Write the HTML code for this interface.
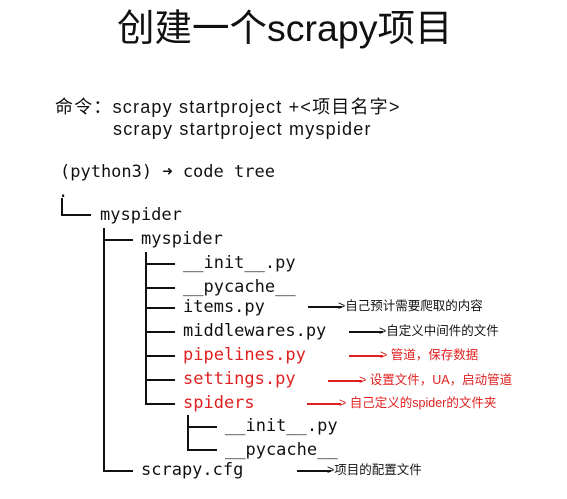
<!DOCTYPE html><html><head><meta charset="utf-8"><style>
body{margin:0;width:567px;height:499px;background:#fff;position:relative;overflow:hidden;font-family:"Liberation Sans","Noto Sans CJK SC",sans-serif;color:#111}
.a{position:absolute;white-space:nowrap}
.m{font-family:"DejaVu Sans Mono","Liberation Mono",monospace;font-size:17px;line-height:20px}
.r{color:#e02020}
.n{font-size:12.5px;line-height:16px}
.v{position:absolute;width:2px;background:#111}
.h{position:absolute;height:2px;background:#111}
.ar{position:absolute;height:1.5px}
.c{font-size:18px;line-height:22px;letter-spacing:1.2px}
</style></head><body>
<div class="a" style="left:117px;top:6px;font-size:37.5px;line-height:44px">创建一个scrapy项目</div>
<div class="a c" style="left:55px;top:96px">命令：scrapy startproject +&lt;项目名字&gt;</div>
<div class="a c" style="left:113px;top:118px">scrapy startproject myspider</div>
<div class="a m" style="left:60px;top:162px">(python3) ➜  code tree</div>
<div class="a m" style="left:58px;top:182px">.</div>
<div class="v" style="left:61px;top:198px;height:18px"></div><div class="h" style="left:61px;top:214px;width:30px"></div>
<div class="a m" style="left:100px;top:205px">myspider</div>
<div class="v" style="left:103px;top:228px;height:243px"></div>
<div class="h" style="left:103px;top:239px;width:30px"></div>
<div class="a m" style="left:141px;top:229px">myspider</div>
<div class="v" style="left:145px;top:252px;height:152px"></div>
<div class="h" style="left:145px;top:263px;width:30px"></div><div class="a m" style="left:183px;top:253px">__init__.py</div>
<div class="h" style="left:145px;top:287px;width:30px"></div><div class="a m" style="left:183px;top:277px">__pycache__</div>
<div class="h" style="left:145px;top:307px;width:30px"></div><div class="a m" style="left:183px;top:297px">items.py</div>
<div class="h" style="left:145px;top:331px;width:30px"></div><div class="a m" style="left:183px;top:321px">middlewares.py</div>
<div class="h" style="left:145px;top:355px;width:30px"></div><div class="a m r" style="left:183px;top:345px">pipelines.py</div>
<div class="h" style="left:145px;top:379px;width:30px"></div><div class="a m r" style="left:183px;top:369px">settings.py</div>
<div class="h" style="left:145px;top:403px;width:30px"></div><div class="a m r" style="left:183px;top:393px">spiders</div>
<div class="v" style="left:187px;top:415px;height:36px"></div>
<div class="h" style="left:187px;top:426px;width:30px"></div><div class="a m" style="left:225px;top:416px">__init__.py</div>
<div class="h" style="left:187px;top:449px;width:30px"></div><div class="a m" style="left:225px;top:440px">__pycache__</div>
<div class="h" style="left:103px;top:470px;width:30px"></div><div class="a m" style="left:141px;top:460px">scrapy.cfg</div>

<div class="ar" style="left:308px;top:306px;width:34px;background:#111"></div><div class="a n" style="left:338px;top:298px">&gt;自己预计需要爬取的内容</div>
<div class="ar" style="left:349px;top:331px;width:34px;background:#111"></div><div class="a n" style="left:379px;top:323px">&gt;自定义中间件的文件</div>
<div class="ar" style="left:349px;top:355px;width:34px;background:#e02020"></div><div class="a n r" style="left:380px;top:347px">&gt; 管道，保存数据</div>
<div class="ar" style="left:328px;top:380px;width:34px;background:#e02020"></div><div class="a n r" style="left:359px;top:372px">&gt; 设置文件，UA，启动管道</div>
<div class="ar" style="left:307px;top:403px;width:34px;background:#e02020"></div><div class="a n r" style="left:339px;top:395px">&gt; 自己定义的spider的文件夹</div>
<div class="ar" style="left:297px;top:470px;width:34px;background:#111"></div><div class="a n" style="left:327px;top:462px">&gt;项目的配置文件</div>
</body></html>
